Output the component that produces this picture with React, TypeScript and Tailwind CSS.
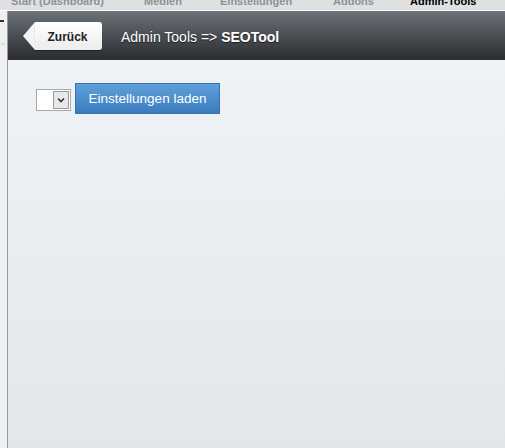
import React from 'react';

const tabs = [
  { label: 'Start (Dashboard)', left: 11, active: false },
  { label: 'Medien', left: 144, active: false },
  { label: 'Einstellungen', left: 220, active: false },
  { label: 'Addons', left: 333, active: false },
  { label: 'Admin-Tools', left: 410, active: true },
];

const TabBar = () => (
  <div className="relative h-[10px] overflow-hidden bg-[#dfe0e1]">
    {tabs.map(t => (
      <span
        key={t.label}
        className={`absolute top-[-6px] whitespace-nowrap text-[11px] font-bold leading-[14px] ${t.active ? 'text-black' : 'text-[#8e9296]'}`}
        style={{ left: t.left }}
      >
        {t.label}
      </span>
    ))}
  </div>
);

const BackButton = () => (
  <div className="flex h-[28px] items-stretch">
    <svg width="12" height="28" viewBox="0 0 12 28" className="block">
      <path d="M12 0 L12 28 L0 14 Z" fill="#f4f4f4" />
    </svg>
    <div className="flex w-[67px] items-center justify-center rounded-r-[3px] bg-gradient-to-b from-[#ffffff] to-[#ececec] pt-[2px] pr-[2px] text-[12px] font-bold text-[#222] shadow-[0_1px_1px_rgba(0,0,0,0.4)]">
      Zurück
    </div>
  </div>
);

export default function App() {
  return (
    <div className="flex h-[448px] w-[505px] flex-col overflow-hidden font-['Liberation_Sans',Arial,sans-serif]">
      <TabBar />
      <div className="h-px bg-white" />
      <div className="flex flex-1">
        {/* narrow side strip */}
        <div className="relative w-[8px] border-r border-[#9a9a9a] bg-[#efefef]">
          <div className="absolute left-0 top-[9px] h-[2px] w-[4px] bg-[#333]" />
          <div className="absolute left-[1px] top-[30px] text-[8px] leading-none text-[#bbb]">^</div>
        </div>
        <div className="flex flex-1 flex-col">
          <div className="flex h-[49px] items-center gap-[19px] bg-gradient-to-b from-[#6d7379] to-[#2a2c2f] pl-[15px]">
            <BackButton />
            <div className="pt-[3px] text-[14px] text-white [text-shadow:0_1px_1px_rgba(0,0,0,0.6)]">
              Admin Tools =&gt; <span className="font-bold">SEOTool</span>
            </div>
          </div>
          <div className="flex-1 bg-gradient-to-b from-[#f0f3f6] to-[#e3e7ea] pl-[28px] pt-[23px]">
            <div className="flex items-center gap-[4px]">
              <div className="mt-[2px] flex h-[22px] w-[35px] items-stretch border border-[#a8a8a8] bg-white">
                <div className="flex-1" />
                <div className="m-[1px] flex w-[16px] items-center justify-center border border-[#9a9a9a] bg-[#e8e8e8]">
                  <svg width="8" height="6" viewBox="0 0 8 6">
                    <path d="M1 1.5 L4 4.5 L7 1.5" stroke="#333" strokeWidth="1.6" fill="none" />
                  </svg>
                </div>
              </div>
              <button className="h-[31px] w-[145px] border border-[#3a72ad] bg-gradient-to-b from-[#5fa0da] to-[#3b7cc0] pt-[1px] text-[13.5px] text-white">
                Einstellungen laden
              </button>
            </div>
          </div>
        </div>
      </div>
    </div>
  );
}
